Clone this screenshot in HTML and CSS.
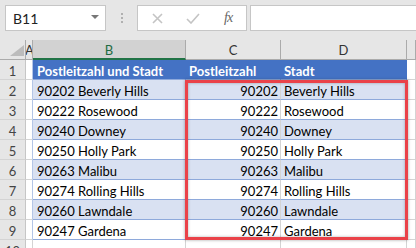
FILE: index.html
```html
<!DOCTYPE html>
<html lang="de">
<head>
    <meta charset="UTF-8">
    <meta name="viewport" content="width=device-width, initial-scale=1.0">
    <title>Postleitzahl und Stadt</title>
    <link rel="stylesheet" href="styles.css">
</head>
<body>
    <div class="formula-bar">
        <div class="name-box"><span>B11</span><span class="caret"></span></div>
        <div class="grip">
            <svg width="2" height="10" viewBox="0 0 2 10"><rect y="0" width="2" height="2"/><rect y="4" width="2" height="2"/><rect y="8" width="2" height="2"/></svg>
        </div>
        <div class="fx-box">
            <svg class="cancel" width="11" height="11" viewBox="0 0 11 11"><path d="M1 1 L10 10 M10 1 L1 10"/></svg>
            <svg class="enter" width="14" height="11" viewBox="0 0 14 11"><path d="M1 6 L5 10 L13 1"/></svg>
            <span class="fx">fx</span>
        </div>
        <div class="formula-input"></div>
    </div>

    <div class="sheet">
        <div class="row col-heads">
            <div class="cell rh corner"><svg width="14" height="11" viewBox="0 0 14 11"><polygon points="0,11 14,11 14,0"/></svg></div>
            <div class="cell ca">A</div>
            <div class="cell cb selected">B</div>
            <div class="cell cc">C</div>
            <div class="cell cd">D</div>
            <div class="cell ce"></div>
        </div>
        <div class="row table-head">
            <div class="cell rh">1</div>
            <div class="cell ca"></div>
            <div class="cell cb">Postleitzahl und Stadt</div>
            <div class="cell cc">Postleitzahl</div>
            <div class="cell cd">Stadt</div>
            <div class="cell ce"></div>
        </div>
        <div class="row band">
            <div class="cell rh">2</div>
            <div class="cell ca"></div>
            <div class="cell cb">90202 Beverly Hills</div>
            <div class="cell cc num">90202</div>
            <div class="cell cd">Beverly Hills</div>
            <div class="cell ce"></div>
        </div>
        <div class="row">
            <div class="cell rh">3</div>
            <div class="cell ca"></div>
            <div class="cell cb">90222 Rosewood</div>
            <div class="cell cc num">90222</div>
            <div class="cell cd">Rosewood</div>
            <div class="cell ce"></div>
        </div>
        <div class="row band">
            <div class="cell rh">4</div>
            <div class="cell ca"></div>
            <div class="cell cb">90240 Downey</div>
            <div class="cell cc num">90240</div>
            <div class="cell cd">Downey</div>
            <div class="cell ce"></div>
        </div>
        <div class="row">
            <div class="cell rh">5</div>
            <div class="cell ca"></div>
            <div class="cell cb">90250 Holly Park</div>
            <div class="cell cc num">90250</div>
            <div class="cell cd">Holly Park</div>
            <div class="cell ce"></div>
        </div>
        <div class="row band">
            <div class="cell rh">6</div>
            <div class="cell ca"></div>
            <div class="cell cb">90263 Malibu</div>
            <div class="cell cc num">90263</div>
            <div class="cell cd">Malibu</div>
            <div class="cell ce"></div>
        </div>
        <div class="row">
            <div class="cell rh">7</div>
            <div class="cell ca"></div>
            <div class="cell cb">90274 Rolling Hills</div>
            <div class="cell cc num">90274</div>
            <div class="cell cd">Rolling Hills</div>
            <div class="cell ce"></div>
        </div>
        <div class="row band">
            <div class="cell rh">8</div>
            <div class="cell ca"></div>
            <div class="cell cb">90260 Lawndale</div>
            <div class="cell cc num">90260</div>
            <div class="cell cd">Lawndale</div>
            <div class="cell ce"></div>
        </div>
        <div class="row">
            <div class="cell rh">9</div>
            <div class="cell ca"></div>
            <div class="cell cb">90247 Gardena</div>
            <div class="cell cc num">90247</div>
            <div class="cell cd">Gardena</div>
            <div class="cell ce"></div>
        </div>
        <div class="row empty">
            <div class="cell rh">10</div>
            <div class="cell ca"></div>
            <div class="cell cb"></div>
            <div class="cell cc"></div>
            <div class="cell cd"></div>
            <div class="cell ce"></div>
        </div>

        <div class="highlight"></div>
    </div>
</body>
</html>
```

FILE: styles.css
```css
body { margin: 0; width: 416px; height: 248px; overflow: hidden; background: #e6e6e6; font-family: "Lato", "Liberation Sans", sans-serif; color: #000; }

/* formula bar */
.formula-bar { display: flex; align-items: flex-start; height: 40px; padding: 5px 0 0 5px; box-sizing: border-box; }
.name-box { width: 101px; height: 26px; box-sizing: border-box; background: #fff; border: 1px solid #c6c6c6; display: flex; align-items: center; justify-content: space-between; padding: 0 6px 0 7px; font-size: 14px; color: #222; }
.caret { width: 0; height: 0; border-left: 4px solid transparent; border-right: 4px solid transparent; border-top: 4px solid #777; margin-bottom: 3px; }
.grip { width: 31px; height: 26px; display: flex; align-items: center; justify-content: center; fill: #b0b0b0; }
.fx-box { width: 110px; height: 26px; box-sizing: border-box; background: #fff; border: 1px solid #c6c6c6; display: flex; align-items: center; padding-left: 14px; }
.fx-box svg path { fill: none; stroke: #c4c4c4; stroke-width: 1.6; }
.cancel { margin-right: 23px; }
.enter { margin-right: 24px; }
.fx { font-family: "Liberation Serif", serif; font-style: italic; font-size: 14px; color: #666; letter-spacing: -1px; }
.formula-input { flex: 1; height: 26px; margin-left: 3px; box-sizing: border-box; background: #fff; border: 1px solid #c6c6c6; border-right: none; }

/* sheet */
.sheet { position: relative; background: #fff; }
.row { display: grid; grid-template-columns: 26px 7px 153px 95px 126px 1fr; height: 20px; }
.cell { box-sizing: border-box; height: 20px; border-right: 1px solid #d4d4d4; border-bottom: 1px solid #d4d4d4; font-size: 13px; line-height: 20px; padding: 1px 3px 0 4px; white-space: nowrap; overflow: hidden; }

.rh { background: #e6e6e6; color: #444; text-align: center; padding: 1px 0 0; border-right-color: #c6c6c6; border-bottom-color: #d4d4d4; }
.ca { padding: 0; }

.col-heads .cell { background: #e6e6e6; color: #333; text-align: center; padding: 0; border-right-color: #ababab; border-bottom-color: #ababab; line-height: 20px; }
.col-heads .corner { display: flex; align-items: flex-end; justify-content: flex-end; padding: 0 1px 3px 0; fill: #bcbcbc; }
.col-heads .ca { overflow: hidden; text-indent: -1px; }
.col-heads .selected { background: #d2d2d2; color: #1e6b41; border-bottom: 2px solid #217346; }

.table-head .cb, .table-head .cc, .table-head .cd { background: #4472c4; color: #fff; font-weight: 700; border-right-color: #4472c4; border-bottom-color: #8ea9db; }
.table-head .cc { padding-left: 3px; }
.table-head .cd { padding-left: 3px; }

.row:not(.col-heads):not(.empty) .cb, .row:not(.col-heads):not(.empty) .cc, .row:not(.col-heads):not(.empty) .cd { border-bottom-color: #8ea9db; }
.row:not(.col-heads):not(.table-head):not(.empty) .cb { border-right-color: #8ea9db; }
.row:not(.col-heads):not(.empty) .ca { border-right-color: #b4c6e7; }
.band .cb, .band .cc, .band .cd { background: #d9e1f2; }
.cc.num { text-align: right; padding-right: 2px; }
.cd { padding-left: 3px; }

.highlight { position: absolute; left: 185px; top: 40px; width: 223px; height: 160px; box-sizing: border-box; border: 3px solid #ea4249; box-shadow: 0 0 3px rgba(0, 0, 0, 0.35), inset 0 0 3px rgba(0, 0, 0, 0.3); }
```
